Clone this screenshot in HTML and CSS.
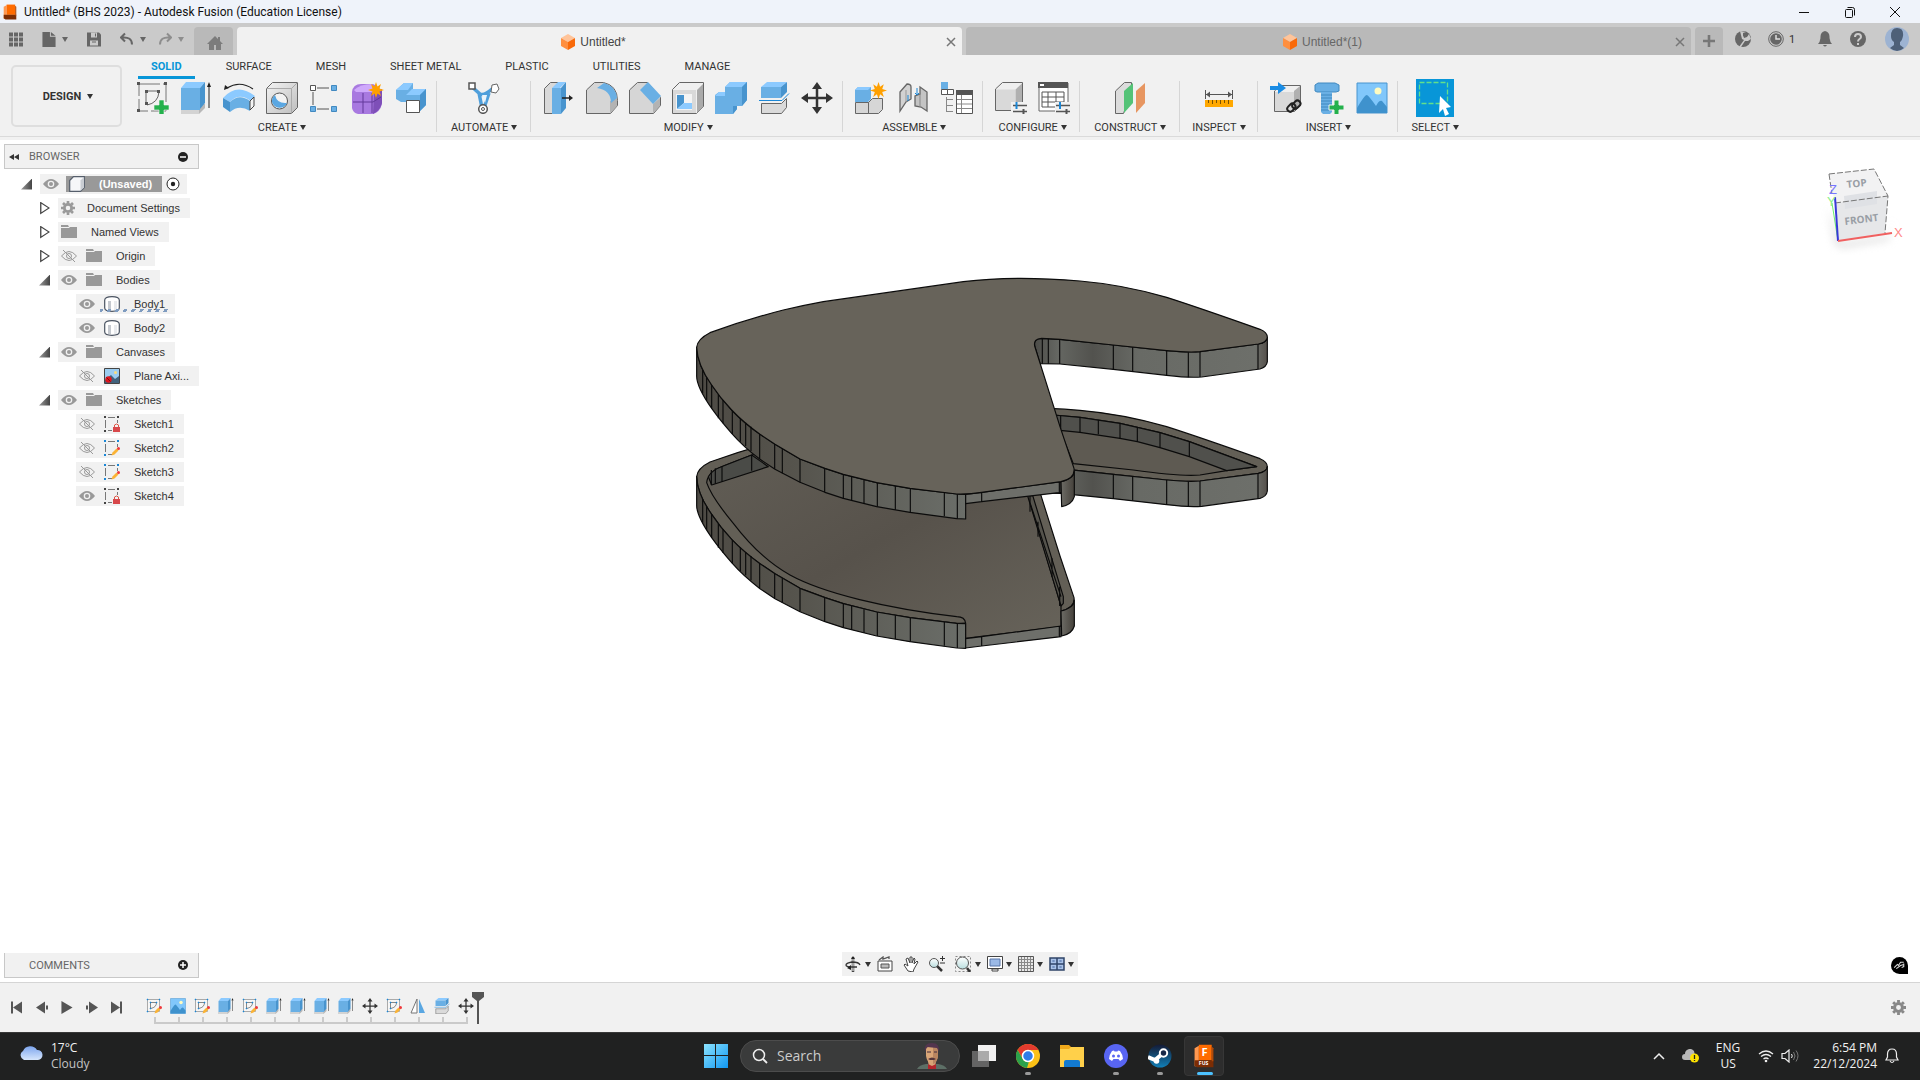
FILE: index.html
```html
<!DOCTYPE html>
<html lang="en">
<head>
    <meta charset="UTF-8">
    <meta name="viewport" content="width=device-width, initial-scale=1.0">
    <title>Untitled* (BHS 2023) - Autodesk Fusion (Education License)</title>
    <link rel="stylesheet" href="styles.css">
</head>
<body>
    <!-- Icon sprite -->
    <svg class="sprite" aria-hidden="true">
        <defs>
            <linearGradient id="gGray" x1="0" y1="0" x2="1" y2="1"><stop offset="0" stop-color="#f4f4f4"/><stop offset="1" stop-color="#bdbdbd"/></linearGradient>
            <linearGradient id="gGlass" x1="0" y1="0" x2="0" y2="1"><stop offset="0" stop-color="#ffffff"/><stop offset="1" stop-color="#b9dedf"/></linearGradient>
            <linearGradient id="gFloor" x1="0" y1="0" x2="1" y2="1"><stop offset="0" stop-color="#625e56"/><stop offset="0.5" stop-color="#57524b"/><stop offset="1" stop-color="#67635a"/></linearGradient>
            <linearGradient id="gWall" x1="0" y1="0" x2="1" y2="0"><stop offset="0" stop-color="#4d4a44"/><stop offset="0.35" stop-color="#55534c"/><stop offset="1" stop-color="#6b6e69"/></linearGradient>
            <linearGradient id="gArm" x1="0" y1="0" x2="1" y2="0"><stop offset="0" stop-color="#4c4c48"/><stop offset="0.1" stop-color="#656762"/><stop offset="0.25" stop-color="#52524e"/><stop offset="0.45" stop-color="#686a65"/><stop offset="0.95" stop-color="#6d6f6a"/><stop offset="1" stop-color="#55504b"/></linearGradient>
            <linearGradient id="gPost" x1="0" y1="0" x2="1" y2="0"><stop offset="0" stop-color="#6d6c66"/><stop offset="1" stop-color="#45413b"/></linearGradient>
            <linearGradient id="gWin" x1="0" y1="0" x2="1" y2="1"><stop offset="0" stop-color="#8be3ff"/><stop offset="1" stop-color="#1097f2"/></linearGradient>
            <linearGradient id="gCloud" x1="0" y1="0" x2="0" y2="1"><stop offset="0" stop-color="#7ea6ee"/><stop offset="1" stop-color="#d6e6fc"/></linearGradient>
            <linearGradient id="gSteam" x1="0" y1="0" x2="0" y2="1"><stop offset="0" stop-color="#141a35"/><stop offset="1" stop-color="#1180b8"/></linearGradient>
        </defs>

        <symbol id="fusion" viewBox="0 0 24 28">
            <path d="M1 5 6 2v24H1z" fill="#ff9850"/><path d="M6 1h15v18H6z" fill="#ff6b00"/><path d="M1 19h22v8H4l-3-2z" fill="#7c2d04"/><path d="M21 3l2 2v15h-2z" fill="#b34a08"/>
        </symbol>
        <symbol id="doc-cube" viewBox="0 0 14 16">
            <path d="M7 0l7 4-7 4-7-4z" fill="#ffc49a"/><path d="M0 4l7 4v8l-7-4z" fill="#ff8f3f"/><path d="M14 4L7 8v8l7-4z" fill="#f96a0a"/>
        </symbol>
        <symbol id="sketch" viewBox="0 0 32 32">
            <path d="M2 2h27v27H2z" fill="none" stroke="#777" stroke-dasharray="21 3"/>
            <path d="M9 10v12M9 9h13M22 10q-1 11-12 13" fill="none" stroke="#666"/>
            <g fill="#555"><path d="M0 0h3v3H0zM27 0h3v3h-3zM0 27h3v3H0zM8 8h3v3H8zM20 8h3v3h-3zM8 20h3v3H8z"/></g>
            <path d="M22 18h5v5h5v5h-5v5h-5v-5h-5v-5h5z" fill="#24b14c" stroke="#f1f1f1" stroke-width=".6"/>
        </symbol>
        <symbol id="extrude" viewBox="0 0 32 32">
            <path d="M1 28l6-6h18v4l-6 6H1z" fill="#b8b8b8"/><path d="M1 28h18v4H1z" fill="#d3d3d3"/>
            <path d="M1 6l5-6h19l-5 6z" fill="#8ccaff"/><path d="M1 6h19v22H1z" fill="#69afe4"/><path d="M20 6l5-6v21l-5 6z" fill="#4894ce"/>
            <path d="M29 5v21" stroke="#222"/><path d="M29 0l2 5h-4z" fill="#222"/>
        </symbol>
        <symbol id="revolve" viewBox="0 0 32 32">
            <path d="M0 16q14-16 32-2l-4 5q-12-9-21 1z" fill="#8ccaff"/><path d="M0 16l7 4v10l-7-5z" fill="#4894ce"/><path d="M7 20q9-9 20-1v10q-11-7-20 1z" fill="#69afe4"/><path d="M27 19l4-4v9l-4 4z" fill="#f4f4f4" stroke="#444"/>
            <path d="M4 6q13-8 26 1" fill="none" stroke="#222" stroke-width="1.2"/><path d="M1 8l1-5 4 3z" fill="#222"/>
        </symbol>
        <symbol id="hole" viewBox="0 0 32 32">
            <path d="M.5 6.500l6-6h25v25l-6 6H.5z" fill="url(#gGray)" stroke="#666"/><path d="M.5 6.500h25v25M25.500 6.500l6-6" fill="none" stroke="#aaa"/>
            <circle cx="13.500" cy="19" r="8" fill="#f3f3f3" stroke="#555"/><path d="M9 13q2 9 12 8a8 8 0 0 1-15-1 8 8 0 0 1 3-7z" fill="#5aa7e2"/>
        </symbol>
        <symbol id="pattern" viewBox="0 0 32 32">
            <path d="M8 6h12M8 27h12M4 10v13" stroke="#555"/><path d="M1.500 3.500h5v5h-5z" fill="#fff" stroke="#555"/>
            <g fill="#69afe4" stroke="#4189c0"><path d="M22.500 3.500h5v5h-5zM1.500 24.500h5v5h-5zM22.500 24.500h5v5h-5z"/></g>
        </symbol>
        <symbol id="form" viewBox="0 0 32 32">
            <path d="M0 10q1-8 9-8h12q7 3 9 9v11q-2 8-9 10H6q-5-1-6-6z" fill="#a879e0"/><path d="M22 11l8-4v14q-2 8-9 11z" fill="#7e4fb8"/><path d="M2 8q6-6 18-6l3 8H4z" fill="#cfa9fb"/>
            <path d="M1 20h20l8-5M11 11v20M20 11v20" stroke="#63399a" fill="none"/>
            <use href="#spark" x="16" y="0" width="16" height="16"/>
        </symbol>
        <symbol id="spark" viewBox="0 0 16 16">
            <path d="M8 0l1.500 4.500L13 2l-1.500 4.500L16 8l-4.500 1.500L13 14l-3.500-2.500L8 16l-1.500-4.500L3 14l1.500-4.500L0 8l4.500-1.500L3 2l3.500 2.500z" fill="#ffa000"/>
        </symbol>
        <symbol id="derive" viewBox="0 0 32 32">
            <path d="M1 8l8-7h9v6h13v16l-6 6h-5v-9H6l-5-3z" fill="#69afe4"/><path d="M1 8l8-7h9l-5 7zM11 13l6-6h14l-6 6z" fill="#8ccaff"/><path d="M25 13l6-6v16l-6 6z" fill="#4894ce"/>
            <path d="M11.500 18.500h13v12h-13z" fill="#fff" stroke="#555"/>
        </symbol>
        <symbol id="automate" viewBox="0 0 32 32">
            <path d="M3 4l9 8q4 2 12-5M11 11l3 15M21 11l-5 15" fill="none" stroke="#4f9fdb" stroke-width="3.500"/><path d="M14 13h5l-2 8z" fill="#e9f4fc"/>
            <path d="M1 1h6v6H1z" fill="#fff" stroke="#555" stroke-width="1.500"/><path d="M24 3l5-1 2 5-3 4-5-1z" fill="#fff" stroke="#666"/>
            <circle cx="15" cy="27" r="4.300" fill="#fff" stroke="#555" stroke-width="1.500"/><circle cx="15" cy="27" r="1.500" fill="none" stroke="#555"/>
        </symbol>
        <symbol id="presspull" viewBox="0 0 32 32">
            <path d="M1.500 6.500l6-6h8l-6 6v25h-8z" fill="#d9d9d9" stroke="#666"/><path d="M9 6l6-6h8l-6 6z" fill="#8ccaff"/><path d="M9 6h9v26H9z" fill="#69afe4"/><path d="M18 6l5-6v26l-5 6z" fill="#4894ce"/>
            <path d="M19 16h7" stroke="#222" stroke-width="1.500"/><path d="M26 13l4 3-4 3z" fill="#222"/>
        </symbol>
        <symbol id="fillet" viewBox="0 0 32 32">
            <path d="M.5 8l8-7.500h9q14 3 14 18v5l-7 8h-24z" fill="#d6d6d6" stroke="#666"/><path d="M24 19l7-3v8l-7 7z" fill="#b3b3b3"/><path d="M11 6l7-5q12 3 13 15l-6 5q0-13-14-15z" fill="#69afe4"/>
        </symbol>
        <symbol id="chamfer" viewBox="0 0 32 32">
            <path d="M.5 8l8-7.500h10l13 15v8l-7 8h-24z" fill="#d6d6d6" stroke="#666"/><path d="M24 22l7-6v8l-7 7z" fill="#b3b3b3"/><path d="M11 8l8-8 13 14-8 8z" fill="#69afe4"/>
        </symbol>
        <symbol id="shell" viewBox="0 0 32 32">
            <path d="M.5 7.500l7-7h24v24l-7 7H.5z" fill="#f0f0f0" stroke="#666"/><path d="M1 8h23v23H1z" fill="#d9d9d9"/><path d="M25 8l6-6v23l-6 6z" fill="#aaa"/><path d="M4 12h16v16H4z" fill="#f4f4f4"/><path d="M5 13h7v8l-7 6z" fill="#4894ce"/><path d="M5 27l7-6h8v6z" fill="#8ccaff"/>
        </symbol>
        <symbol id="combine" viewBox="0 0 32 32">
            <path d="M0 13l4-3h6V5l5-5h17v18l-5 6h-5v3l-4 5H0z" fill="#69afe4"/><path d="M10 5l5-5h17l-5 5zM0 14l4-4h6v4z" fill="#8ccaff"/><path d="M27 5l5-5v18l-5 6zM18 24h4v3l-4 5z" fill="#4894ce"/>
        </symbol>
        <symbol id="split" viewBox="0 0 32 32">
            <path d="M3 5l6-5h20l-6 5z" fill="#8ccaff"/><path d="M3 5h20v11H3z" fill="#69afe4"/><path d="M23 5l6-5v10l-6 6z" fill="#4894ce"/><path d="M1 18.500h23l7-7" stroke="#1b87d6" fill="none"/>
            <path d="M3.500 21.500h20l5-5v9l-5 6h-20z" fill="#dadada" stroke="#666"/>
        </symbol>
        <symbol id="move" viewBox="0 0 32 32">
            <path d="M16 4v24M4 16h24" stroke="#333" stroke-width="2.500"/><path d="M16 0l5 7H11zM16 32l5-7H11zM0 16l7-5v10zM32 16l-7-5v10z" fill="#333"/>
        </symbol>
        <symbol id="newcomp" viewBox="0 0 32 32">
            <path d="M0 8l3-3h13v12l-3 3H0z" fill="#69afe4"/><path d="M0 8l3-3h13l-3 3z" fill="#8ccaff"/><path d="M.5 20.500h13v11H.5zM13.500 20.500l4-4h10v11l-4 4h-10z" fill="#d6d6d6" stroke="#666"/>
            <use href="#spark" x="15" y="0" width="17" height="17"/>
        </symbol>
        <symbol id="joint" viewBox="0 0 32 32">
            <path d="M2 10l7-8q4 0 4 3v12l-5 3-6 9z" fill="#d2d2d2" stroke="#666" stroke-width="1.300"/><path d="M8 8v12" stroke="#999"/><path d="M29 29l-6-4-6-1V14l5-2V5l7 5z" fill="#c4c4c4" stroke="#666" stroke-width="1.300"/><path d="M22 12v13" stroke="#888"/><path d="M10 13v6M19 6v7M17 11l2 2 2-2" stroke="#1b87d6" fill="none"/>
        </symbol>
        <symbol id="asmtable" viewBox="0 0 32 32">
            <path d="M0 0h7v7H0z" fill="#69afe4"/><path d="M.5 7.500h6v5h-6zM6.500 7.500h6v5h-6z" fill="#fff" stroke="#555"/><path d="M5.500 15v15M6 17.500h6M6 23.500h6M6 29.500h6" stroke="#888"/>
            <path d="M15.500 8.500h16v23h-16z" fill="#fff" stroke="#555"/><path d="M15 8h17v5H15z" fill="#555"/><path d="M20.500 13v18M16 17.500h15M16 22h15M16 26.500h15" stroke="#888"/>
        </symbol>
        <symbol id="configure" viewBox="0 0 32 32">
            <path d="M.5 7l7-6.500h20v20l-7 8H.5z" fill="#efefef" stroke="#666"/><path d="M1 7.500h19V28H1z" fill="#d9d9d9"/><path d="M20.500 7.500l6.500-6v19l-6.500 7z" fill="#b0b0b0"/>
            <path d="M16 20h16v12H16z" fill="#f1f1f1"/><path d="M18 23.500h14M18 29.500h14" stroke="#555" stroke-width="1.500"/><path d="M21.500 20v7" stroke="#1b87d6" stroke-width="2"/><path d="M28.500 27v5" stroke="#555" stroke-width="2"/>
        </symbol>
        <symbol id="conftable" viewBox="0 0 32 32">
            <path d="M1 1h29v28H1z" fill="#fff" stroke="#666"/><path d="M0 0h30v6H0z" fill="#555"/><path d="M2 2h4v2H2z" fill="#fff"/><path d="M4 10h22v15H4zM4 15h22M4 20h22M10 10v15M18 10v15" stroke="#555" fill="none"/>
            <path d="M17 20h15v12H17z" fill="#f1f1f1"/><path d="M18 23.500h14M18 29.500h14" stroke="#555" stroke-width="1.500"/><path d="M22 20v7" stroke="#1b87d6" stroke-width="2"/><path d="M28.500 27v5" stroke="#555" stroke-width="2"/>
        </symbol>
        <symbol id="construct" viewBox="0 0 32 32">
            <path d="M1.500 9l9-8.500h7v8l-8 23h-8z" fill="#dcdcdc" stroke="#666"/><path d="M10 9l9-8v20l-9 10z" fill="#54c377"/><path d="M22 9l9-8v20l-9 10z" fill="#e79661"/>
        </symbol>
        <symbol id="measure" viewBox="0 0 32 32">
            <path d="M2.500 8v9M29.500 8v9M3 12.500h26" stroke="#555"/><path d="M3 12.500l4-3v6zM29 12.500l-4-3v6z" fill="#555"/><path d="M2 18h28v7H2z" fill="#ffa800"/><path d="M5.500 18v3M9.500 18v4M13.500 18v3M17.500 18v4M21.500 18v3M25.500 18v4" stroke="#7a5200"/>
        </symbol>
        <symbol id="insert" viewBox="0 0 32 32">
            <path d="M4.500 9l6-5.500h20v20l-6 6h-20z" fill="#efefef" stroke="#666"/><path d="M5 10h19v19H5z" fill="#d9d9d9"/><path d="M24 9l6-5v20l-6 5z" fill="#b0b0b0"/><path d="M0 4h8V0l8 6-8 6V8H0z" fill="#1a8ce4"/>
            <g fill="none" stroke="#222" stroke-width="2"><rect x="17" y="23" width="9" height="6" rx="3" transform="rotate(-45 21 26)"/><rect x="22" y="20" width="9" height="6" rx="3" transform="rotate(-45 26 23)"/></g>
        </symbol>
        <symbol id="bolt" viewBox="0 0 32 32">
            <path d="M2 3l3-2h17l4 2v6l-3 1H4L2 9z" fill="#69afe4" stroke="#4189c0"/><path d="M8 10h11v20l-2 2h-7l-2-2z" fill="#69afe4"/><path d="M8 13h11M8 16h11M8 19h11M8 22h11M8 25h11M8 28h11" stroke="#4189c0"/>
            <path d="M21 18h5v5h5v5h-5v5h-5v-5h-5v-5h5z" fill="#24b14c" stroke="#f1f1f1"/>
        </symbol>
        <symbol id="picture" viewBox="0 0 32 32">
            <path d="M1 1h30v30H1z" fill="#81c7fb" stroke="#4894ce"/><path d="M1 26q8-14 10-13t9 11q3-6 6-5l5 6v6H1z" fill="#3f92cd"/><circle cx="22" cy="9" r="3.500" fill="#fffbc0"/>
        </symbol>
        <symbol id="select" viewBox="0 0 38 38">
            <path d="M3.500 3.500h28v21h-28z" fill="none" stroke="#63e08a" stroke-width="1.300" stroke-dasharray="5 2"/><path d="M24 17l11 11-5 1 3 6-4 2-2-7-4 4z" fill="#fff"/>
        </symbol>

        <symbol id="eye" viewBox="0 0 16 12">
            <path d="M0 6q8-10 16 0-8 10-16 0z" fill="#999"/><circle cx="8" cy="6" r="3.300" fill="#f1f1f1"/><circle cx="8" cy="6" r="2" fill="#999"/>
        </symbol>
        <symbol id="eye-off" viewBox="0 0 16 12">
            <path d="M.5 6q7.500-9 15 0-7.500 9-15 0z" fill="none" stroke="#999"/><circle cx="8" cy="6" r="2.500" fill="none" stroke="#999"/><path d="M2 0l12 12" stroke="#999"/>
        </symbol>
        <symbol id="folder" viewBox="0 0 16 16"><path d="M0 1h7l1 2H0zM0 4h8l1-1h7v11H0z" fill="#999"/></symbol>
        <symbol id="gear" viewBox="0 0 16 16">
            <circle cx="8" cy="8" r="4.200" fill="none" stroke="currentColor" stroke-width="3.200"/><path d="M8 0v3M8 13v3M0 8h3M13 8h3M2.300 2.300l2 2M11.700 11.700l2 2M13.700 2.300l-2 2M4.300 11.700l-2 2" stroke="currentColor" stroke-width="3"/>
        </symbol>
        <symbol id="component" viewBox="0 0 16 16"><path d="M.7 4.500L4.500.7h10.800v10.800l-3.800 3.800H.7z" fill="#f6f7f9" stroke="#555e6b" stroke-width="1.200"/><path d="M11.500 4.500l3.500-3.500v10.500l-3.500 3.500z" fill="#c9cdd3"/></symbol>
        <symbol id="body" viewBox="0 0 16 16"><path d="M.7 4Q1 .7 8 .7T15.300 4v8q-.2 3.300-7.300 3.300T.7 12z" fill="#fff" stroke="#4b5462" stroke-width="1.200"/><path d="M4 5h3v9H4z" fill="#c5c9cf"/><path d="M10 5h3v9h-3z" fill="#e9ebee"/></symbol>
        <symbol id="canvas" viewBox="0 0 16 16"><path d="M.5.500h15v15H.5z" fill="#9ccdf0" stroke="#444"/><path d="M1 12l6-5 4 4 4-3v7H1z" fill="#41627c"/><circle cx="11.500" cy="4.500" r="1.500" fill="#f8dd7c"/><circle cx="4.500" cy="11.500" r="3.200" fill="#e0141c"/><path d="M2.500 9.500l4 4" stroke="#7d0c10"/></symbol>
        <symbol id="sk-lock" viewBox="0 0 16 16"><path d="M1.500 4v8M4 1.500h7M13.500 4v3M4 14.500h4" stroke="#777"/><path d="M0 0h2v2H0zM13 0h2v2h-2zM0 14h2v2H0z" fill="#444"/><path d="M10.500 11V9q2-2 4 0v2" fill="none" stroke="#d54" stroke-width="1"/><path d="M9 11h7v5H9z" fill="#d8484b"/></symbol>
        <symbol id="sk-edit" viewBox="0 0 16 16"><path d="M1.500 4v8M4 1.500h7M13.500 4v3M4 14.500h4" stroke="#777"/><path d="M0 0h2v2H0zM13 0h2v2h-2zM0 14h2v2H0z" fill="#1b87d6"/><path d="M7.500 15.500l1-3 4-4 2 2-4 4z" fill="#fbb335"/><circle cx="14.500" cy="8.500" r="1.500" fill="#f0383c"/></symbol>
        <symbol id="tl-sketch" viewBox="0 0 16 16"><path d="M1.500 1.500h12v12h-12z" fill="#f6f6f6" stroke="#aaa"/><path d="M4.500 4.500h6q0 5-6 6z" fill="none" stroke="#888"/><path d="M1 1h1v1H1zM13 1h1v1h-1zM1 13h1v1H1zM4 4h1v1H4zM10 4h1v1h-1zM4 10h1v1H4z" fill="#1b87d6" stroke="#1b87d6" stroke-width=".5"/><path d="M8.500 15.500l1-3 3-3 2 2-3 3z" fill="#fbb335"/><circle cx="14.500" cy="9.500" r="1.500" fill="#f0383c"/></symbol>
        <symbol id="tl-mirror" viewBox="0 0 16 16"><path d="M7 1v14H1z" fill="#fff" stroke="#777"/><path d="M9 1v14h6z" fill="#5aa7e2"/></symbol>
        <symbol id="home" viewBox="0 0 16 14"><path d="M8 0l3 3V1h2v4l3 3h-2v6H9V9H7v5H2V8H0z" fill="#7c7c7c"/></symbol>
    </svg>

    <header class="titlebar">
        <svg class="titlebar-logo"><use href="#fusion"/></svg>
        <h1>Untitled* (BHS 2023) - Autodesk Fusion (Education License)</h1>
        <div class="window-buttons">
            <button aria-label="Minimize"><svg viewBox="0 0 12 12"><path d="M1 6.500h10" stroke="#111"/></svg></button>
            <button aria-label="Restore"><svg viewBox="0 0 12 12"><rect x="1.500" y="3.500" width="7" height="8" rx="1" fill="none" stroke="#111"/><path d="M3.500 1.500h5q2 0 2 2v6" fill="none" stroke="#111"/></svg></button>
            <button aria-label="Close"><svg viewBox="0 0 12 12"><path d="M1 1l10 10M11 1L1 11" stroke="#111"/></svg></button>
        </div>
    </header>

    <div class="tabbar">
        <div class="quick">
            <button aria-label="Data panel"><svg viewBox="0 0 14 14"><path d="M0 0h4v4H0zM5 0h4v4H5zM10 0h4v4h-4zM0 5h4v4H0zM5 5h4v4H5zM10 5h4v4h-4zM0 10h4v4H0zM5 10h4v4H5zM10 10h4v4h-4z" fill="#666"/></svg></button>
            <button class="with-caret" aria-label="File"><svg viewBox="0 0 14 16"><path d="M0 0h8v5h6v11H0zM9 0l5 4H9z" fill="#666"/></svg><span class="caret"></span></button>
            <button aria-label="Save"><svg viewBox="0 0 14 14"><path d="M0 0h12l2 2v12H0z" fill="#666"/><path d="M4 0h6v5H4zM3 8h8v5H3z" fill="#cacaca"/><path d="M8 1h1v3H8zM5 9h4v1H5z" fill="#666"/></svg></button>
            <button class="with-caret" aria-label="Undo"><svg viewBox="0 0 14 14"><path d="M5 1L1 5l4 4M2 5q10-1 10 7" fill="none" stroke="#666" stroke-width="2"/></svg><span class="caret"></span></button>
            <button class="with-caret faded" aria-label="Redo"><svg viewBox="0 0 14 14"><path d="M9 1l4 4-4 4M12 5Q2 4 2 12" fill="none" stroke="#666" stroke-width="2"/></svg><span class="caret"></span></button>
        </div>
        <button class="home-tab" aria-label="Home"><svg><use href="#home"/></svg></button>
        <div class="doc-tab active"><a href="#"><svg><use href="#doc-cube"/></svg>Untitled*</a><button aria-label="Close tab"><svg viewBox="0 0 10 10"><path d="M1 1l8 8M9 1L1 9" stroke="#777" stroke-width="1.500"/></svg></button></div>
        <div class="doc-tab"><a href="#"><svg><use href="#doc-cube"/></svg>Untitled*(1)</a><button aria-label="Close tab"><svg viewBox="0 0 10 10"><path d="M1 1l8 8M9 1L1 9" stroke="#777" stroke-width="1.500"/></svg></button></div>
        <button class="new-tab" aria-label="New tab"><svg viewBox="0 0 14 14"><path d="M7 0v14M0 7h14" stroke="#777" stroke-width="3"/></svg></button>
        <div class="account">
            <button aria-label="Extensions"><svg viewBox="0 0 16 16"><circle cx="8" cy="8" r="8" fill="#666"/><path d="M5 0l6 1-3 3 1 3 3-1 2-3 2 5-3 2h-3l-4 6H4l5-7-2-1z" fill="#cacaca"/><path d="M8 2q4-2 5 2l-2 2-3-1z" fill="#666"/></svg></button>
            <button class="jobs"><svg viewBox="0 0 16 16"><circle cx="8" cy="8" r="7.300" fill="none" stroke="#666"/><circle cx="8" cy="8" r="5.800" fill="#666"/><path d="M8 4v4h4" fill="none" stroke="#ddd" stroke-width="1.500"/></svg>1</button>
            <button class="bell" aria-label="Notifications"><svg viewBox="0 0 16 16"><path d="M8 0q5 1 4.500 7 .5 4 2.500 6H1q2-2 2.500-6Q3 1 8 0zM6 14h4q-2 3-4 0z" fill="#666"/></svg></button>
            <button class="help" aria-label="Help"><svg viewBox="0 0 16 16"><circle cx="8" cy="8" r="8" fill="#666"/><path d="M5 6q0-3 3-3t3 3q0 1-1.500 2T8 10.500" fill="none" stroke="#ccc" stroke-width="2"/><path d="M7 12h2v2H7z" fill="#ccc"/></svg></button>
            <button class="avatar" aria-label="Profile"><svg viewBox="0 0 24 24"><circle cx="12" cy="12" r="12" fill="#9db3d2"/><path d="M12 1q7 0 6 8-1 5-3 6v3l4 3q-7 6-14 0l4-3v-3q-3-2-3-6 0-8 6-8z" fill="#4e6078"/></svg></button>
        </div>
    </div>

    <section class="ribbon">
        <button class="workspace">DESIGN <span class="caret"></span></button>
        <div class="ribbon-main">
            <nav class="ribbon-tabs">
                <a href="#" class="current">SOLID</a>
                <a href="#">SURFACE</a>
                <a href="#">MESH</a>
                <a href="#">SHEET METAL</a>
                <a href="#">PLASTIC</a>
                <a href="#">UTILITIES</a>
                <a href="#">MANAGE</a>
            </nav>
            <div class="groups">
                <div class="group">
                    <div class="tools">
                        <button aria-label="Create sketch"><svg><use href="#sketch"/></svg></button>
                        <button aria-label="Extrude"><svg><use href="#extrude"/></svg></button>
                        <button aria-label="Revolve"><svg><use href="#revolve"/></svg></button>
                        <button aria-label="Hole"><svg><use href="#hole"/></svg></button>
                        <button aria-label="Pattern"><svg><use href="#pattern"/></svg></button>
                        <button aria-label="Create form"><svg><use href="#form"/></svg></button>
                        <button aria-label="Derive"><svg><use href="#derive"/></svg></button>
                    </div>
                    <button class="group-name">CREATE <span class="caret"></span></button>
                </div>
                <div class="group wide">
                    <div class="tools"><button aria-label="Automated modeling"><svg><use href="#automate"/></svg></button></div>
                    <button class="group-name">AUTOMATE <span class="caret"></span></button>
                </div>
                <div class="group">
                    <div class="tools">
                        <button aria-label="Press pull"><svg><use href="#presspull"/></svg></button>
                        <button aria-label="Fillet"><svg><use href="#fillet"/></svg></button>
                        <button aria-label="Chamfer"><svg><use href="#chamfer"/></svg></button>
                        <button aria-label="Shell"><svg><use href="#shell"/></svg></button>
                        <button aria-label="Combine"><svg><use href="#combine"/></svg></button>
                        <button aria-label="Split body"><svg><use href="#split"/></svg></button>
                        <button aria-label="Move"><svg><use href="#move"/></svg></button>
                    </div>
                    <button class="group-name">MODIFY <span class="caret"></span></button>
                </div>
                <div class="group">
                    <div class="tools">
                        <button aria-label="New component"><svg><use href="#newcomp"/></svg></button>
                        <button aria-label="Joint"><svg><use href="#joint"/></svg></button>
                        <button aria-label="Assembly table"><svg><use href="#asmtable"/></svg></button>
                    </div>
                    <button class="group-name">ASSEMBLE <span class="caret"></span></button>
                </div>
                <div class="group">
                    <div class="tools">
                        <button aria-label="Configure"><svg><use href="#configure"/></svg></button>
                        <button aria-label="Configuration table"><svg><use href="#conftable"/></svg></button>
                    </div>
                    <button class="group-name">CONFIGURE <span class="caret"></span></button>
                </div>
                <div class="group wide">
                    <div class="tools"><button aria-label="Offset plane"><svg><use href="#construct"/></svg></button></div>
                    <button class="group-name">CONSTRUCT <span class="caret"></span></button>
                </div>
                <div class="group even">
                    <div class="tools"><button aria-label="Measure"><svg><use href="#measure"/></svg></button></div>
                    <button class="group-name">INSPECT <span class="caret"></span></button>
                </div>
                <div class="group">
                    <div class="tools">
                        <button aria-label="Insert derive"><svg><use href="#insert"/></svg></button>
                        <button aria-label="Insert fastener"><svg><use href="#bolt"/></svg></button>
                        <button aria-label="Canvas"><svg><use href="#picture"/></svg></button>
                    </div>
                    <button class="group-name">INSERT <span class="caret"></span></button>
                </div>
                <div class="group wide">
                    <div class="tools"><button class="selected" aria-label="Select"><svg><use href="#select"/></svg></button></div>
                    <button class="group-name">SELECT <span class="caret"></span></button>
                </div>
            </div>
        </div>
    </section>

    <main class="viewport">
        <!-- Model on the canvas -->
        <svg class="model" viewBox="0 0 1800 1200">
            <defs>
                <path id="face" d="M50 262Q52 237 90 218Q200 178 310 150Q370 136 430 125L850 65Q1000 46 1200 63Q1330 74 1460 112Q1560 144 1740 208Q1762 217 1762 232Q1760 248 1735 252L1560 275Q1525 278 1460 272L1300 255L1140 238L1085 235Q1060 236 1064 258L1140 500L1182 625Q1186 655 1143 665L905 697Q870 703 830 702L690 685L590 668L490 643L435 625L360 597L285 553L240 523Q190 487 155 450Q120 413 95 375Q52 315 50 262z"/>
                <path id="front" d="M50 262Q52 315 95 375Q120 413 155 450Q190 487 240 523L285 553L360 597L435 625L490 643L590 668L690 685L830 702L857 703V777L830 776L690 757L590 740L490 715L435 697L360 667L285 628L240 598Q190 560 155 520Q120 480 95 445Q48 378 50 345z"/>
                <path id="arm" d="M1064 258Q1060 236 1085 235L1140 238L1300 255L1460 272Q1525 278 1560 275L1735 252Q1760 248 1762 232V305Q1760 321 1740 327L1565 351Q1525 354 1460 346L1300 328L1140 312L1080 311z"/>
                <path id="lip" d="M857 703L905 697L1143 665V697L905 725L857 731zM905 697V725M1138 666V697"/>
                <path id="post" d="M1143 665Q1183 655 1183 632V710Q1176 734 1145 740z"/>
                <path id="ticks" d="M68 330V400M80 352V422M95 375V445M115 403V475M129 420V490M157 452V522M181 474V545M197 488V558M213 500V573M239 522V597M284 552V627M307 566V640M360 597V667M434 625V697M490 643V715M515 650V722M552 660V731M592 668V740M646 678V749M691 685V757M793 698V769M832 703V776M1087 236V311M1105 236V311M1139 238V312M1300 255V328M1358 262V334M1460 272V346M1525 277V352M1560 275V351M1734 253V327"/>
            </defs>
            <g stroke="#0b0b0b" stroke-width="3.500" stroke-linejoin="round">
                <g transform="translate(0 388)">
                    <use href="#face" fill="#635f56"/>
                    <use href="#front" fill="url(#gWall)"/>
                    <use href="#arm" fill="url(#gArm)"/>
                </g>
                <path d="M80 668Q82 638 130 618L215 585L420 540L1045 708L1143 1038V1100L905 1129L857 1135V1090Q855 1070 830 1070C620 1045 430 1000 330 945Q240 895 160 790Q95 712 80 668z" fill="url(#gFloor)"/>
                <path d="M85 650Q95 630 130 618L215 585L265 620L95 675z" fill="#4a4b47"/><path d="M94 630V675M106 625V671M126 618V665M215 585V632" fill="none"/>
                <path d="M1043 708L1058 706L1150 1010V1030L1143 1038z" fill="#55534c"/><path d="M1050 728L1143 1010M1050 706V755M1074 785V830M1116 895V950M1139 980V1038" fill="none"/>
                <path d="M1120 465L1200 472L1320 490L1372 502L1440 518L1528 545L1730 620L1640 632L1560 645Q1500 650 1360 630L1180 611L1140 510z" fill="#5e5a52"/>
                <path d="M1120 465L1200 472L1320 490L1372 502L1440 518L1528 545L1730 620L1640 632L1528 590L1440 563L1372 545L1320 535L1200 517L1140 511z" fill="#50504c"/>
                <path d="M1142 467V511M1200 472V517M1255 480V523M1320 490V535M1372 502V545M1440 518V563M1528 545V590" fill="none"/>
                <g transform="translate(0 388)">
                    <use href="#post" fill="url(#gPost)"/><use href="#ticks" fill="none"/>
                </g>
                <use href="#lip" y="433" fill="#6e6f6a"/>
                <use href="#front" fill="url(#gWall)"/>
                <use href="#arm" fill="url(#gArm)"/>
                <use href="#lip" fill="#6e6f6a"/>
                <use href="#post" fill="url(#gPost)"/>
                <use href="#face" fill="#67635a"/>
                <use href="#ticks" fill="none"/>
            </g>
        </svg>

        <aside class="browser">
            <div class="panel-head">
                <svg class="collapse" viewBox="0 0 10 6"><path d="M5 0v6L0 3zM10 0v6L5 3z" fill="#333"/></svg>
                <h2>BROWSER</h2>
                <button aria-label="Minimize browser"><svg viewBox="0 0 10 10"><circle cx="5" cy="5" r="5" fill="#222"/><path d="M2 5h6" stroke="#fff" stroke-width="1.500"/></svg></button>
            </div>
            <ul class="tree">
                <li class="lvl0"><span class="arrow open"></span><div class="node root"><svg class="eye"><use href="#eye"/></svg><span class="root-name"><svg class="ico"><use href="#component"/></svg><b>(Unsaved)</b></span><svg class="radio" viewBox="0 0 14 14"><circle cx="7" cy="7" r="6" fill="#fff" stroke="#222"/><circle cx="7" cy="7" r="2.200" fill="#222"/></svg></div></li>
                <li class="lvl1"><span class="arrow"></span><div class="node"><svg class="ico gear"><use href="#gear"/></svg><span>Document Settings</span></div></li>
                <li class="lvl1"><span class="arrow"></span><div class="node"><svg class="ico"><use href="#folder"/></svg><span>Named Views</span></div></li>
                <li class="lvl1"><span class="arrow"></span><div class="node"><svg class="eye"><use href="#eye-off"/></svg><svg class="ico"><use href="#folder"/></svg><span>Origin</span></div></li>
                <li class="lvl1"><span class="arrow open"></span><div class="node"><svg class="eye"><use href="#eye"/></svg><svg class="ico"><use href="#folder"/></svg><span>Bodies</span></div></li>
                <li class="lvl2"><div class="node marked"><svg class="eye"><use href="#eye"/></svg><svg class="ico"><use href="#body"/></svg><span>Body1</span></div></li>
                <li class="lvl2"><div class="node"><svg class="eye"><use href="#eye"/></svg><svg class="ico"><use href="#body"/></svg><span>Body2</span></div></li>
                <li class="lvl1"><span class="arrow open"></span><div class="node"><svg class="eye"><use href="#eye"/></svg><svg class="ico"><use href="#folder"/></svg><span>Canvases</span></div></li>
                <li class="lvl2"><div class="node"><svg class="eye"><use href="#eye-off"/></svg><svg class="ico"><use href="#canvas"/></svg><span>Plane Axi...</span></div></li>
                <li class="lvl1"><span class="arrow open"></span><div class="node"><svg class="eye"><use href="#eye"/></svg><svg class="ico"><use href="#folder"/></svg><span>Sketches</span></div></li>
                <li class="lvl2"><div class="node"><svg class="eye"><use href="#eye-off"/></svg><svg class="ico"><use href="#sk-lock"/></svg><span>Sketch1</span></div></li>
                <li class="lvl2"><div class="node"><svg class="eye"><use href="#eye-off"/></svg><svg class="ico"><use href="#sk-edit"/></svg><span>Sketch2</span></div></li>
                <li class="lvl2"><div class="node"><svg class="eye"><use href="#eye-off"/></svg><svg class="ico"><use href="#sk-edit"/></svg><span>Sketch3</span></div></li>
                <li class="lvl2"><div class="node"><svg class="eye"><use href="#eye"/></svg><svg class="ico"><use href="#sk-lock"/></svg><span>Sketch4</span></div></li>
            </ul>
        </aside>

        <svg class="viewcube" viewBox="0 0 110 100">
            <path d="M18 52l9 38 52-8 4-20-4 22-48 8z" fill="#bbb" class="cube-shadow"/>
            <path d="M19 19l45-5 14 27-53 7z" fill="#f2f2f3"/><path d="M25 48l53-7-3 37-47 8z" fill="#e6e7e9"/><path d="M34 41l33-5v13l-32 5z" fill="#dfe1e5"/>
            <path d="M19 19l45-5 14 27-3 37M25 48l53-7M19 19l3 20" fill="none" stroke="#777" stroke-dasharray="6 2"/>
            <path d="M22 48l6 38" stroke="#6cf06c"/><path d="M25 42l3 44" stroke="#3838d8" stroke-width="2"/><path d="M28 86l54-8" stroke="#f06060" stroke-width="2"/>
            <text x="37" y="33" class="cube-top" transform="rotate(-6 37 33)">TOP</text>
            <text x="35" y="70" class="cube-front" transform="rotate(-7 35 70)">FRONT</text>
            <text x="17" y="51" class="axis y">Y</text><text x="19" y="39" class="axis z">Z</text><text x="84" y="82" class="axis x">X</text>
        </svg>

        <div class="comments">
            <h2>COMMENTS</h2>
            <button aria-label="Open comments"><svg viewBox="0 0 10 10"><circle cx="5" cy="5" r="5" fill="#222"/><path d="M2 5h6M5 2v6" stroke="#fff" stroke-width="1.500"/></svg></button>
        </div>

        <div class="navbar">
            <button class="menu" aria-label="Orbit"><svg viewBox="0 0 16 16"><path d="M8 1v15" stroke="#444" stroke-width="2.500"/><path d="M8 2v13" stroke="#fff"/><path d="M15 9q-1-3-8-3-6 1-6 3t6 2h5" fill="none" stroke="#333" stroke-width="1.300"/><path d="M2 12l4-3v5zM8 0l2 3H6z" fill="#222"/></svg><span class="caret"></span></button>
            <button aria-label="Look at"><svg viewBox="0 0 16 16"><path d="M1 5h14v10H1z" fill="#fff" stroke="#444"/><path d="M4 8h8v4H4z" fill="#bbb" stroke="#555"/><path d="M2 4l4-3v2l6-2v2" fill="none" stroke="#555" stroke-width="1.300"/></svg></button>
            <button aria-label="Pan"><svg viewBox="0 0 16 16"><path d="M5 15L1 9l1-1 3 2-2-7 2-1 2 5V1h2v6l2-5 1 1-1 5 3-3 1 1-4 7-1 3z" fill="#fff" stroke="#444"/></svg></button>
            <button aria-label="Zoom"><svg viewBox="0 0 16 16"><path d="M8 10l5 5" stroke="#333" stroke-width="2.500"/><circle cx="5" cy="7" r="4.500" fill="url(#gGlass)" stroke="#555"/><path d="M13.500 0v5M11 2.500h5M11 7h5" stroke="#333"/></svg></button>
            <button class="menu" aria-label="Fit"><svg viewBox="0 0 16 16"><path d="M.5.500h15v15H.5z" fill="none" stroke="#888" stroke-dasharray="2 2"/><path d="M12 12l3 4" stroke="#333" stroke-width="2.500"/><circle cx="7.500" cy="7" r="6" fill="url(#gGlass)" stroke="#555"/></svg><span class="caret"></span></button>
            <button class="menu tight" aria-label="Display settings"><svg viewBox="0 0 16 16"><path d="M.5.500h15v12H.5z" fill="#fff" stroke="#444"/><path d="M3 3h10v7H3z" fill="#9bb9e6" stroke="#5674a8"/><path d="M5 13h6v2H5z" fill="#fff" stroke="#444"/></svg><span class="caret"></span></button>
            <button class="menu tight" aria-label="Grid and snaps"><svg viewBox="0 0 16 16"><path d="M.5.500h15v15H.5z" fill="#e8e8e8" stroke="#555"/><path d="M3.500 1v14M6.500 1v14M9.500 1v14M12.500 1v14M1 3.500h14M1 6.500h14M1 9.500h14M1 12.500h14" stroke="#888"/></svg><span class="caret"></span></button>
            <button class="menu tight" aria-label="Viewports"><svg viewBox="0 0 16 16"><path d="M1 2h14v12H1z" fill="#a9c2e8" stroke="#2f4468" stroke-width="1.500"/><path d="M8 2v12M1 8h14" stroke="#2f4468" stroke-width="1.500"/><path d="M3.500 4.500h2v1h-2zM10.500 4.500h2v1h-2zM3.500 10.500h2v1h-2zM10.500 10.500h2v1h-2z" fill="#fff" stroke="#7391c2"/></svg><span class="caret"></span></button>
        </div>

        <button class="assistant" aria-label="Assistant"><svg viewBox="0 0 16 16"><path d="M8 0a8 8 0 0 1 8 8v8H8A8 8 0 0 1 8 0z" fill="#000"/><path d="M3 10l3-3 1 1 2-3h3M5 11l4-3 3-1M10 10l2-1V6" stroke="#ddd" fill="none"/></svg></button>
    </main>

    <footer class="timeline">
        <div class="playback">
            <button aria-label="Go to start"><svg viewBox="0 0 12 12"><path d="M0 0h2v12H0zM11 0v12L2 6z" fill="#555"/></svg></button>
            <button aria-label="Step back"><svg viewBox="0 0 12 12"><path d="M9 0v12L0 6zM10 4h2v4h-2z" fill="#555"/></svg></button>
            <button aria-label="Play"><svg viewBox="0 0 12 14"><path d="M0 0l12 7-12 7z" fill="#555"/></svg></button>
            <button aria-label="Step forward"><svg viewBox="0 0 12 12"><path d="M3 0v12l9-6zM0 4h2v4H0z" fill="#555"/></svg></button>
            <button aria-label="Go to end"><svg viewBox="0 0 12 12"><path d="M0 0v12l9-6zM9 0h2v12H9z" fill="#555"/></svg></button>
        </div>
        <ol class="features">
            <li><svg><use href="#tl-sketch"/></svg></li>
            <li><svg><use href="#picture"/></svg></li>
            <li><svg><use href="#tl-sketch"/></svg></li>
            <li><svg><use href="#extrude"/></svg></li>
            <li><svg><use href="#tl-sketch"/></svg></li>
            <li><svg><use href="#extrude"/></svg></li>
            <li><svg><use href="#extrude"/></svg></li>
            <li><svg><use href="#extrude"/></svg></li>
            <li><svg><use href="#extrude"/></svg></li>
            <li><svg><use href="#move"/></svg></li>
            <li><svg><use href="#tl-sketch"/></svg></li>
            <li><svg><use href="#tl-mirror"/></svg></li>
            <li><svg><use href="#split"/></svg></li>
            <li><svg><use href="#move"/></svg></li>
        </ol>
        <svg class="marker" viewBox="0 0 12 32"><path d="M0 0h12v5L7 9v23H5V9L0 5z" fill="#555"/></svg>
        <button class="settings" aria-label="Timeline settings"><svg><use href="#gear"/></svg></button>
    </footer>

    <div class="taskbar">
        <a href="#" class="weather">
            <svg viewBox="0 0 24 16"><path d="M5 15a5 5 0 0 1-1-9 8 8 0 0 1 14-1 5 5 0 0 1 1 10z" fill="url(#gCloud)"/></svg>
            <span>17°C<br><em>Cloudy</em></span>
        </a>
        <div class="apps">
            <button class="start" aria-label="Start"><svg viewBox="0 0 24 24"><path d="M0 0h11v11H0zM12 0h12v11H12zM0 12h11v12H0zM12 12h12v12H12z" fill="url(#gWin)"/></svg></button>
            <div class="search">
                <svg viewBox="0 0 16 16"><circle cx="7" cy="7" r="5.500" fill="none" stroke="#eee" stroke-width="1.500"/><path d="M11 11l4 4" stroke="#eee" stroke-width="1.800"/></svg>
                <input type="text" placeholder="Search" aria-label="Search">
                <svg class="portrait" viewBox="0 0 32 26"><path d="M1 26q2-4 9-5h12q7 1 9 5z" fill="#5d6f66"/><path d="M12 18h8l-1 6-3 2-3-2z" fill="#d9a577"/><path d="M12 21l4 2 4-2v5h-8z" fill="#b3262c"/><path d="M10 5q6-4 12 0v8q-1 7-6 8-5-1-6-8z" fill="#d9a577"/><path d="M17 4h5v9q-1 7-5 8z" fill="#b98560"/><path d="M9 9q-2-9 7-9 8 0 7 9l-2-4-10-1z" fill="#53354e"/><path d="M12 16q4-3 8 0l-2 1h-4z" fill="#53353a"/><path d="M11 9h4M18 9h3" stroke="#402a3a"/></svg>
            </div>
            <button aria-label="Task view"><svg viewBox="0 0 24 24"><path d="M6 1h18v16H6z" fill="#f1f1f1"/><path d="M0 7h17v16H0z" fill="#6b6b6b" opacity=".9"/><path d="M6 7h11v10H6z" fill="#aaa"/></svg></button>
            <button class="open" aria-label="Chrome"><svg viewBox="0 0 24 24"><circle cx="12" cy="12" r="12" fill="#fbc116"/><path d="M1.600 6A12 12 0 0 1 22.400 6H12a6 6 0 0 0-5.200 9z" fill="#e33b2e"/><path d="M1.600 6l5.200 9a6 6 0 0 0 6 3l-1.800 6A12 12 0 0 1 1.600 6z" fill="#2ba24c"/><circle cx="12" cy="12" r="5.500" fill="#2f7de9" stroke="#fff" stroke-width="1.500"/></svg></button>
            <button aria-label="File Explorer"><svg viewBox="0 0 24 24"><path d="M0 1h9l2 2h13v20H0z" fill="#f0a91b"/><path d="M0 5h9l2-2h13v20H0z" fill="#ffd04a"/><path d="M4 23v-5q0-2 2-2h12q2 0 2 2v5z" fill="#137ad0"/></svg></button>
            <button class="open" aria-label="Discord"><svg viewBox="0 0 24 24"><circle cx="12" cy="12" r="12" fill="#5865f2"/><path d="M8 7l2-.5.500 1h3l.5-1 2 .5q3 4 3 8l-3 2-1.500-2h-5L8 17l-3-2q0-4 3-8z" fill="#fff"/><circle cx="9.500" cy="12" r="1.500" fill="#5865f2"/><circle cx="14.500" cy="12" r="1.500" fill="#5865f2"/></svg></button>
            <button class="open" aria-label="Steam"><svg viewBox="0 0 24 24"><circle cx="12" cy="12" r="11.500" fill="url(#gSteam)"/><path d="M0 13l7 3 6-5" stroke="#fff" stroke-width="4" fill="none"/><circle cx="15.500" cy="9" r="3.700" fill="#182848" stroke="#fff" stroke-width="2"/><circle cx="8.500" cy="17" r="2.800" fill="#fff"/></svg></button>
            <button class="open active" aria-label="Fusion"><svg viewBox="0 0 24 28"><use href="#fusion"/><text x="9" y="14" class="logo-f">F</text><text x="6" y="25" class="logo-fus">FUS</text></svg></button>
        </div>
        <div class="tray">
            <svg class="chev" viewBox="0 0 12 8"><path d="M1 7l5-5 5 5" fill="none" stroke="#eee" stroke-width="1.500"/></svg>
            <svg class="drive" viewBox="0 0 18 14"><path d="M3 11a3 3 0 0 1 0-6 5 5 0 0 1 9-3l2 9z" fill="#b8b8b8"/><circle cx="12.500" cy="9" r="4.500" fill="#fde100"/><path d="M12.500 6v4M12.500 11v1" stroke="#222" stroke-width="1.300"/></svg>
            <span class="lang">ENG<br>US</span>
            <svg class="wifi" viewBox="0 0 16 14"><path d="M1 5q7-6 14 0M3 7.500q5-4 10 0M5.500 10q2.500-2 5 0" fill="none" stroke="#eee" stroke-width="1.300"/><circle cx="8" cy="12" r="1.300" fill="#eee"/></svg>
            <svg class="sound" viewBox="0 0 18 14"><path d="M1 4.500h3l4-3.500v12L4 9.500H1z" fill="none" stroke="#eee" stroke-width="1.200"/><path d="M10.500 5q1.500 2 0 4" fill="none" stroke="#eee"/><path d="M12.500 3q3 4 0 8M15 1.500q4 5 0 11" fill="none" stroke="#777"/></svg>
            <time class="clock">6:54 PM<br>22/12/2024</time>
            <svg class="notify" viewBox="0 0 14 16"><path d="M7 1q4.500 0 4.500 5v3l1.500 3H1l1.500-3V6q0-5 4.500-5zM5 13q2 3 4 0" fill="none" stroke="#eee" stroke-width="1.200"/></svg>
        </div>
    </div>
</body>
</html>
```
FILE: styles.css
```css
* {
    margin: 0;
    padding: 0;
    box-sizing: border-box;
}

body {
    display: flex;
    flex-direction: column;
    height: 100vh;
    overflow: hidden;
    font-family: Roboto, "Liberation Sans", sans-serif;
    font-size: 11px;
    color: #333;
    background: #fff;
}

button {
    display: flex;
    align-items: center;
    justify-content: center;
    border: none;
    background: none;
    font: inherit;
    color: inherit;
    cursor: pointer;
}

a {
    color: inherit;
    text-decoration: none;
}

ul, ol {
    list-style: none;
}

svg {
    display: block;
    flex-shrink: 0;
}

.sprite {
    position: absolute;
    width: 0;
    height: 0;
}

.caret {
    display: inline-block;
    border: 3px solid transparent;
    border-top: 5px solid currentColor;
    border-bottom: 0;
}

/* Title bar */
.titlebar {
    display: flex;
    align-items: center;
    height: 23px;
    padding: 0 13px 0 3px;
    background: #eff3fa;
    color: #111;
}

.titlebar-logo {
    width: 14px;
    height: 16px;
}

.titlebar h1 {
    margin-left: 7px;
    font: 12px/16px Roboto, sans-serif;
}

.window-buttons {
    display: flex;
    margin-left: auto;
}

.window-buttons button {
    width: 46px;
    height: 20px;
}

.window-buttons button:last-child {
    width: 34px;
    justify-content: flex-end;
    padding-right: 6px;
}

.window-buttons svg {
    width: 12px;
    height: 12px;
}

/* Document tabs */
.tabbar {
    display: flex;
    height: 32px;
    padding-top: 4px;
    background: #cacaca;
}

.quick {
    display: flex;
    align-items: center;
    gap: 19px;
    width: 194px;
    padding-left: 9px;
    padding-bottom: 4px;
    color: #666;
}

.quick button {
    gap: 6px;
}

.quick .with-caret + .with-caret {
    margin-left: -7px;
}

.quick .faded {
    opacity: 0.6;
}

.quick svg {
    width: 14px;
    height: 15px;
}

.home-tab,
.doc-tab,
.new-tab {
    border-radius: 4px 4px 0 0;
    background: #b9b9b9;
}

.home-tab {
    width: 39px;
    margin-right: 4px;
    padding: 4px 0 0 2px;
}

.home-tab svg {
    width: 16px;
    height: 14px;
}

.doc-tab {
    display: flex;
    flex: 1;
    align-items: center;
    margin-right: 4px;
    padding: 1px 6px 0 4px;
    font: 12px/16px "Liberation Sans", sans-serif;
    color: #666;
}

.doc-tab.active {
    background: #f1f1f1;
    color: #444;
}

.doc-tab a {
    display: flex;
    flex: 1;
    align-items: center;
    justify-content: center;
    gap: 5px;
}

.doc-tab a svg {
    width: 14px;
    height: 16px;
}

.doc-tab button svg {
    width: 10px;
    height: 10px;
}

.new-tab {
    width: 28px;
}

.new-tab svg {
    width: 12px;
    height: 12px;
}

.account {
    display: flex;
    align-items: center;
    gap: 17px;
    width: 197px;
    padding: 0 11px 4px 12px;
}

.account svg {
    width: 16px;
    height: 16px;
}

.account .jobs {
    gap: 5px;
}

.account .bell {
    margin-left: 5px;
}

.account .avatar {
    margin-left: 2px;
}

.account .avatar svg {
    width: 24px;
    height: 24px;
}

/* Ribbon */
.ribbon {
    display: flex;
    height: 85px;
    background: #f1f1f1;
    box-shadow: inset 0 -3px #f1f1f1, inset 0 -4px #dadada;
}

.workspace {
    width: 111px;
    height: 62px;
    margin: 10px 3px 0 11px;
    padding-left: 3px;
    gap: 6px;
    border: 2px solid #dedede;
    border-radius: 5px;
    font-weight: bold;
}

.ribbon-tabs {
    display: flex;
    gap: 18px;
    height: 24px;
    margin-left: 13px;
}

.ribbon-tabs a {
    padding: 0 13px;
    line-height: 24px;
}

.ribbon-tabs .current {
    border-bottom: 3px solid #0896d8;
    color: #0896d8;
    font-weight: bold;
}

.groups {
    display: flex;
}

.group {
    position: relative;
    padding: 0 10px 0 12px;
}

.group:not(:last-child)::after {
    content: '';
    position: absolute;
    top: 2px;
    right: 0;
    width: 1px;
    height: 51px;
    background: #d6d6d6;
}

.group.wide {
    padding: 0 14px;
}

.group.even {
    padding: 0 12px;
}

.tools {
    display: flex;
    justify-content: center;
    gap: 11px;
    height: 38px;
}

.tools svg {
    width: 32px;
    height: 32px;
}

.tools .selected {
    background: #0896d8;
}

.tools .selected svg {
    width: 38px;
    height: 38px;
}

.group-name {
    gap: 3px;
    width: 100%;
    height: 20px;
    white-space: nowrap;
}

/* Viewport */
.viewport {
    position: relative;
    flex: 1;
    display: flex;
    flex-direction: column;
    background: #fff;
}

.model {
    position: absolute;
    top: 120px;
    left: 680px;
    width: 600px;
    height: 400px;
}

.browser {
    position: relative;
    width: 195px;
    margin: 4px 0 0 4px;
}

.panel-head,
.comments {
    display: flex;
    align-items: center;
    height: 25px;
    padding-right: 10px;
    border: 1px solid #c8c8c8;
    background: #f1f1f1;
    color: #666;
}

.panel-head h2,
.comments h2 {
    font-size: 11px;
    font-weight: normal;
}

.panel-head button,
.comments button {
    margin-left: auto;
}

.panel-head button svg,
.comments button svg {
    width: 10px;
    height: 10px;
}

.collapse {
    width: 10px;
    height: 6px;
    margin: 0 10px 0 4px;
}

.tree {
    padding-top: 3px;
    font-family: "Liberation Sans", sans-serif;
}

.tree li {
    display: flex;
    align-items: center;
    height: 24px;
}

.lvl0 {
    padding-left: 17px;
}

.lvl1 {
    padding-left: 35px;
}

.lvl2 {
    padding-left: 72px;
}

.arrow {
    width: 11px;
    height: 13px;
    margin-right: 8px;
    background: #444;
    clip-path: polygon(10% 0, 100% 50%, 10% 100%, 10% 0, 22% 18%, 22% 82%, 82% 50%, 22% 18%);
}

.arrow.open {
    height: 11px;
    background: linear-gradient(90deg, #999, #444);
    clip-path: polygon(100% 0, 100% 100%, 0 100%);
}

.node {
    display: flex;
    align-items: center;
    height: 20px;
    padding: 0 10px 0 3px;
    background: #f1f1f1;
    white-space: nowrap;
}

.node .eye {
    width: 16px;
    height: 12px;
    margin-right: 9px;
}

.node .ico {
    width: 16px;
    height: 16px;
    margin-right: 14px;
}

.node .gear {
    width: 14px;
    height: 14px;
    margin-right: 12px;
    color: #999;
}

.node.root {
    padding-right: 7px;
}

.root-name {
    display: flex;
    align-items: center;
    height: 16px;
    margin-right: 4px;
    padding: 0 10px 0 3px;
    background: #999;
    color: #fff;
}

.root .eye {
    margin-right: 7px;
}

.radio {
    width: 14px;
    height: 14px;
}

.marked {
    position: relative;
}

.marked::after {
    content: '';
    position: absolute;
    right: 4px;
    bottom: 2px;
    left: 24px;
    height: 3px;
    background: repeating-linear-gradient(120deg, #7f9cc0 0 3px, transparent 3px 7px);
}

.viewcube {
    position: absolute;
    top: 15px;
    right: 0;
    width: 110px;
    height: 100px;
}

.cube-shadow {
    filter: blur(4px);
}

.cube-top,
.cube-front {
    font: bold 10px "Open Sans", sans-serif;
    fill: #999ea5;
}

.axis {
    font: 13px "Liberation Sans", sans-serif;
}

.axis.x {
    fill: #f88;
}

.axis.y {
    fill: #8e8;
}

.axis.z {
    fill: #77f;
}

.comments {
    width: 195px;
    margin: auto 0 4px 4px;
    padding-left: 24px;
    border-top: 0;
}

.navbar {
    position: absolute;
    bottom: 6px;
    left: 50%;
    display: flex;
    gap: 10px;
    height: 24px;
    padding: 0 4px 0 3px;
    background: #f1f1f1;
    transform: translateX(-50%);
}

.navbar .menu {
    gap: 4px;
    margin-right: -4px;
}

.navbar .tight {
    gap: 3px;
}

.navbar .tight:last-child {
    margin-right: 0;
}

.navbar svg {
    width: 16px;
    height: 16px;
}

.assistant {
    position: absolute;
    right: 12px;
    bottom: 8px;
}

.assistant svg {
    width: 17px;
    height: 17px;
}

/* Timeline */
.timeline {
    display: flex;
    height: 50px;
    border-top: 1px solid #d5d5d5;
    background: #f1f1f1;
}

.playback {
    display: flex;
    gap: 13px;
    width: 142px;
    padding-left: 11px;
    padding-bottom: 1px;
}

.playback svg {
    width: 12px;
    height: 13px;
}

.features {
    display: flex;
    padding-top: 15px;
}

.features li {
    position: relative;
    width: 24px;
    height: 26px;
    padding-left: 4px;
    border-bottom: 2px solid #cacaca;
}

.features li::after {
    content: '';
    position: absolute;
    bottom: 0;
    left: 12px;
    width: 2px;
    height: 5px;
    background: #cacaca;
}

.features li:first-child {
    width: 12px;
    margin-left: 12px;
    padding: 0;
}

.features li:first-child::after {
    left: 0;
}

.features li:first-child svg {
    margin-left: -8px;
}

.features li:last-child {
    width: 14px;
}

.features svg {
    width: 16px;
    height: 16px;
}

.marker {
    width: 12px;
    height: 32px;
    margin: 9px 0 0 4px;
}

.settings {
    margin: 0 14px 0 auto;
    color: #888;
}

.settings svg {
    width: 15px;
    height: 15px;
}

/* Taskbar */
.taskbar {
    display: grid;
    grid-template-columns: 1fr auto 1fr;
    height: 48px;
    padding-bottom: 1px;
    background: #202121;
    box-shadow: inset 0 1px #383838;
    font: 12px/16px "Open Sans", sans-serif;
    color: #f2f2f2;
}

.weather {
    display: flex;
    align-items: center;
    gap: 8px;
    padding-left: 19px;
}

.weather svg {
    width: 24px;
    height: 16px;
    margin-bottom: 6px;
}

.weather em {
    font-style: normal;
    color: #c4c4c4;
}

.apps {
    display: flex;
    align-items: center;
    gap: 4px;
}

.apps button {
    position: relative;
    width: 40px;
    height: 40px;
    border-radius: 4px;
}

.apps button svg {
    width: 24px;
    height: 24px;
}

.apps .open::after {
    content: '';
    position: absolute;
    bottom: 1px;
    left: 17px;
    width: 6px;
    height: 3px;
    border-radius: 2px;
    background: #999;
}

.apps .active {
    border: 1px solid #373737;
    background: #2d2d2d;
}

.apps .active::after {
    bottom: 0;
    left: 12px;
    width: 16px;
    background: #4cc2ff;
}

.logo-f {
    font: bold 13px "Open Sans", sans-serif;
    fill: #fff;
}

.logo-fus {
    font: bold 6px "Open Sans", sans-serif;
    fill: #fff;
}

.search {
    display: flex;
    align-items: center;
    width: 220px;
    height: 32px;
    padding: 0 11px;
    border: 1px solid #4c4c4c;
    border-radius: 16px;
    background: #3a3b3b;
}

.search svg {
    width: 16px;
    height: 16px;
}

.search input {
    flex: 1;
    min-width: 0;
    padding-left: 9px;
    border: none;
    outline: none;
    background: none;
    font: 14px/20px "Open Sans", sans-serif;
    color: #ddd;
}

.search input::placeholder {
    color: #ccc;
}

.search .portrait {
    align-self: flex-end;
    width: 32px;
    height: 26px;
    margin-bottom: 2px;
}

.tray {
    display: flex;
    align-items: center;
    justify-content: flex-end;
    padding-right: 21px;
}

.chev {
    width: 12px;
    height: 8px;
    margin-right: 17px;
}

.drive {
    width: 18px;
    height: 14px;
    margin-right: 16px;
}

.lang {
    margin-right: 18px;
    text-align: center;
}

.wifi {
    width: 16px;
    height: 14px;
    margin-right: 7px;
}

.sound {
    width: 18px;
    height: 14px;
    margin-right: 14px;
}

.clock {
    margin-right: 8px;
    text-align: right;
}

.notify {
    width: 14px;
    height: 16px;
}
```
